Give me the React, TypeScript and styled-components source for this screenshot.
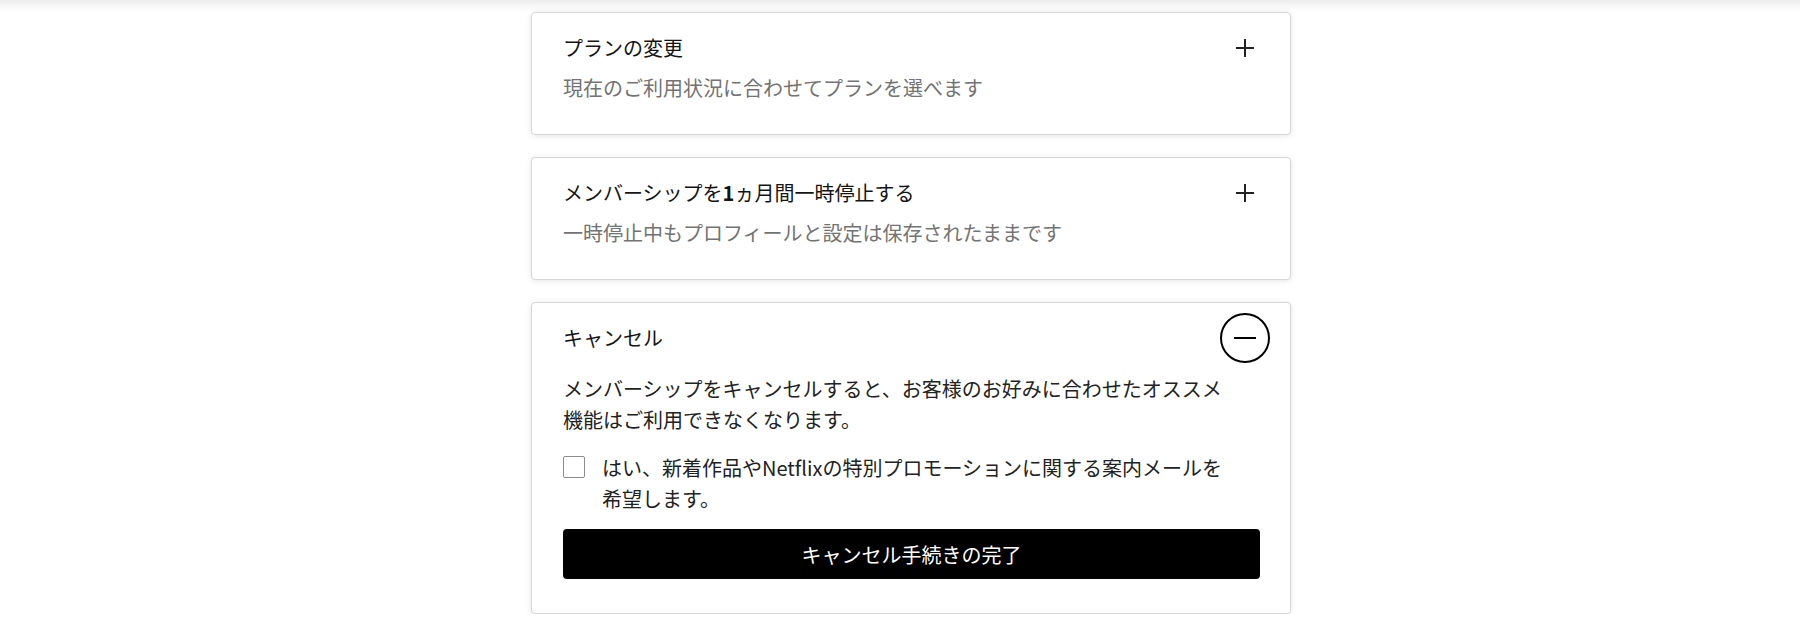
import React from 'react';
import styled, {createGlobalStyle} from 'styled-components';

const GlobalStyle = createGlobalStyle`
  body {
    margin: 0;
    background: #fff;
    font-family: "Noto Sans CJK JP", "Noto Sans", sans-serif;
    color: #141414;
  }
`;

const Bold = styled.b`
  font-weight: 700;
`;

interface OptionI {
    title: React.ReactNode;
    description: string;
}

const App = () => {
    const options: OptionI[] = [
        {title: 'プランの変更', description: '現在のご利用状況に合わせてプランを選べます'},
        {
            title: <>メンバーシップを<Bold>1</Bold>ヵ月間一時停止する</>,
            description: '一時停止中もプロフィールと設定は保存されたままです'
        },
    ];
    return <>
        <GlobalStyle/>
        <TopShade/>
        <Column>
            {options.map((o, i) => <Card key={i}>
                <CardHeader>
                    <CardTitle>{o.title}</CardTitle>
                    <ToggleButton aria-label="開く">
                        <PlusIcon/>
                    </ToggleButton>
                </CardHeader>
                <Description>{o.description}</Description>
            </Card>)}
            <Card>
                <CardHeader>
                    <CardTitle>キャンセル</CardTitle>
                    <ToggleButton aria-label="閉じる" $open>
                        <MinusIcon/>
                    </ToggleButton>
                </CardHeader>
                <BodyText>
                    メンバーシップをキャンセルすると、お客様のお好みに合わせたオススメ機能はご利用できなくなります。
                </BodyText>
                <CheckRow>
                    <CheckBox type="checkbox"/>
                    <CheckLabel>
                        はい、新着作品やNetflixの特別プロモーションに関する案内メールを希望します。
                    </CheckLabel>
                </CheckRow>
                <FinishButton>キャンセル手続きの完了</FinishButton>
            </Card>
        </Column>
    </>;
};

const PlusIcon = () => <svg width="18" height="18" viewBox="0 0 18 18">
    <path d="M9 0v18M0 9h18" stroke="#222" strokeWidth="2" fill="none"/>
</svg>;

const MinusIcon = () => <svg width="22" height="4" viewBox="0 0 22 4">
    <path d="M0 2h22" stroke="#000" strokeWidth="2" fill="none"/>
</svg>;

const TopShade = styled.div`
  height: 12px;
  background: linear-gradient(#ececec, #f7f7f7 50%, #fff);
`;

const Column = styled.div`
  width: 760px;
  margin-left: calc(50% - 369px);
  display: flex;
  flex-direction: column;
  gap: 22px;
`;

const Card = styled.div`
  background: #fff;
  border: 1px solid #d6d6d6;
  border-radius: 4px;
  box-shadow: 0 1px 6px rgba(0, 0, 0, 0.1);
  padding: 10px 30px 32px 31px;
`;

const CardHeader = styled.div`
  display: flex;
  align-items: center;
  justify-content: space-between;
  height: 50px;
  margin-right: -10px;
`;

const CardTitle = styled.div`
  font-size: 20px;
  line-height: 28px;
  color: #141414;
`;

const ToggleButton = styled.button<{$open?: boolean}>`
  width: 50px;
  height: 50px;
  padding: 0;
  background: transparent;
  border: 2px solid ${p => p.$open ? '#000' : 'transparent'};
  border-radius: 50%;
  display: flex;
  align-items: center;
  justify-content: center;
  cursor: pointer;
`;

const Description = styled.div`
  margin-top: 1px;
  font-size: 20px;
  line-height: 28px;
  color: #737373;
`;

const BodyText = styled.p`
  margin: 10px 0 0;
  padding-right: 30px;
  font-size: 20px;
  line-height: 31px;
  color: #222;
`;

const CheckRow = styled.label`
  display: flex;
  align-items: flex-start;
  gap: 17px;
  margin-top: 17px;
`;

const CheckBox = styled.input`
  appearance: none;
  flex: none;
  width: 22px;
  height: 22px;
  margin: 4px 0 0;
  border: 1px solid #8c8c8c;
  border-radius: 2px;
  background: #fff;
`;

const CheckLabel = styled.span`
  padding-right: 30px;
  font-size: 20px;
  line-height: 31px;
  color: #222;
`;

const FinishButton = styled.button`
  display: block;
  width: 100%;
  height: 50px;
  margin: 15px 0 2px;
  background: #000;
  color: #fff;
  border: none;
  border-radius: 4px;
  font-family: inherit;
  font-size: 20px;
  cursor: pointer;
`;

export default App;
